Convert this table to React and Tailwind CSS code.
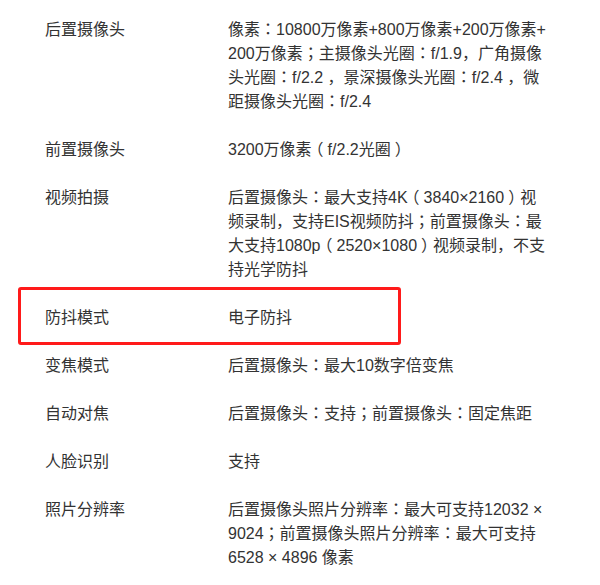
import React from "react";

const rows = [
  {
    label: "后置摄像头",
    lines: [
      "像素：10800万像素+800万像素+200万像素+",
      "200万像素；主摄像头光圈：f/1.9，广角摄像",
      "头光圈：f/2.2 ，景深摄像头光圈：f/2.4 ，微",
      "距摄像头光圈：f/2.4",
    ],
  },
  { label: "前置摄像头", lines: ["3200万像素（f/2.2光圈）"] },
  {
    label: "视频拍摄",
    lines: [
      "后置摄像头：最大支持4K（3840×2160）视",
      "频录制，支持EIS视频防抖；前置摄像头：最",
      "大支持1080p（2520×1080）视频录制，不支",
      "持光学防抖",
    ],
  },
  { label: "防抖模式", lines: ["电子防抖"], boxed: true },
  { label: "变焦模式", lines: ["后置摄像头：最大10数字倍变焦"] },
  { label: "自动对焦", lines: ["后置摄像头：支持；前置摄像头：固定焦距"] },
  { label: "人脸识别", lines: ["支持"] },
  {
    label: "照片分辨率",
    lines: [
      "后置摄像头照片分辨率：最大可支持12032 ×",
      "9024；前置摄像头照片分辨率：最大可支持",
      "6528 × 4896 像素",
    ],
  },
];

const TC = { fontFamily: '"Noto Sans CJK TC", sans-serif' };

function Punct({ ch }) {
  if (ch === "：" || ch === "；")
    return (
      <span className="leading-none" style={TC}>
        {ch}
      </span>
    );
  return (
    <span className="inline-block w-[16px] text-center leading-none [font-feature-settings:'halt']">
      {ch}
    </span>
  );
}

function Line({ text }) {
  const parts = text.split(/([：；（）])/);
  return (
    <div className="h-[24px]">
      {parts.map((p, i) =>
        /^[：；（）]$/.test(p) ? <Punct key={i} ch={p} /> : <React.Fragment key={i}>{p}</React.Fragment>
      )}
    </div>
  );
}

export default function App() {
  return (
    <div
      className="w-[600px] h-[585px] bg-white text-[#333333] text-[16px] leading-[24px] overflow-hidden pt-[6px]"
      style={{ fontFamily: '"Liberation Sans", "Noto Sans CJK SC", sans-serif' }}
    >
      {rows.map((r, i) => (
        <div key={i} className="relative grid grid-cols-[183px_330px] pl-[45px] py-3">
          {r.boxed && (
            <div className="absolute left-[18px] top-[-7px] w-[383px] h-[58px] border-[3px] border-[#ff1a1a] rounded-[3px]" />
          )}
          <div className="whitespace-nowrap h-[24px]">{r.label}</div>
          <div className="whitespace-nowrap">
            {r.lines.map((l, j) => (
              <Line key={j} text={l} />
            ))}
          </div>
        </div>
      ))}
    </div>
  );
}
